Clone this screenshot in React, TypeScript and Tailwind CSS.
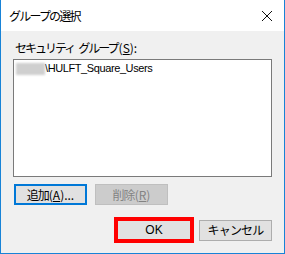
import React from 'react';

const jp = "font-['Yu_Gothic_UI','Noto_Sans_CJK_JP',sans-serif]";

export default function App() {
  return (
    <div className="w-[285px] h-[254px] flex flex-col bg-[#f0f0f0] border-x border-b border-[#1883d7] text-black overflow-hidden">
      {/* Title bar */}
      <div className="h-[31px] shrink-0 bg-white flex items-center justify-between pl-[8px] pr-[10px]">
        <span className={`${jp} text-[12px] tracking-[-1.8px] leading-none`}>グループの選択</span>
        <svg width="12" height="12" viewBox="0 0 12 12" className="mr-[1px]">
          <path d="M1 1 L11 11 M11 1 L1 11" stroke="#111" strokeWidth="1" fill="none" />
        </svg>
      </div>

      {/* Body */}
      <div className="flex flex-col px-[12px] pt-[10px]">
        <label className={`${jp} pl-[2px] h-[14px] text-[12px] leading-[14px]`}>
          <span className="tracking-[-2px]">セキュリティ</span>
          <span className="ml-[4px] tracking-[-2px]">グループ</span>
          <span className="ml-[1px]">
            (<span className="underline">S</span>):
          </span>
        </label>

        <div className="mt-[4px] h-[118px] bg-white border border-[#7a7a7a] pt-[1px] pl-[1px]">
          <div className="flex items-center h-[15px]">
            <div className="w-[29px] h-[12px] ml-[1px] bg-[#cfcfcf] blur-[1px]" />
            <span className="font-['Liberation_Sans',sans-serif] text-[11px] leading-none tracking-[-0.4px]">
              \HULFT_Square_Users
            </span>
          </div>
        </div>

        <div className="mt-[7px] flex gap-[8px] pl-[1px]">
          <button className={`${jp} w-[73px] h-[21px] bg-[#e1e1e1] border-2 border-[#0078d7] text-[12px] leading-none flex items-center justify-center`}>
            <span className="tracking-[-1px]">追加</span>
            <span>
              (<span className="underline">A</span>)...
            </span>
          </button>
          <button
            disabled
            className={`${jp} w-[73px] h-[21px] bg-[#cccccc] border border-[#bfbfbf] text-[#838383] text-[12px] leading-none flex items-center justify-center`}
          >
            <span className="tracking-[-1px]">削除</span>
            <span>
              (<span className="underline">R</span>)
            </span>
          </button>
        </div>

        <div className="mt-[12px] flex items-center justify-end gap-[5px]">
          <div className="w-[80px] h-[26px] border-4 border-[#ff0000] bg-[#e1e1e1] flex items-center justify-center">
            <span className="font-['Liberation_Sans',sans-serif] text-[12px] leading-none">OK</span>
          </div>
          <button className={`${jp} w-[73px] h-[21px] bg-[#e1e1e1] border border-[#adadad] text-[12px] leading-none tracking-[-0.8px] flex items-center justify-center`}>
            キャンセル
          </button>
        </div>
      </div>
    </div>
  );
}
